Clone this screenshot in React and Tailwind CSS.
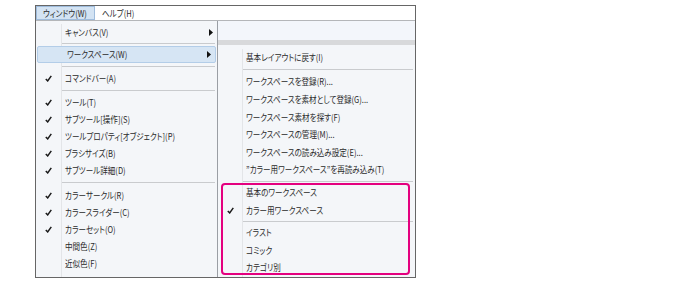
import React from "react";

const Check = () => (
  <svg width="7" height="7" viewBox="0 0 7 7" className="block">
    <path d="M0.8 3.9 L2.7 5.9 L6.3 0.9" fill="none" stroke="#1a1a1a" strokeWidth="1.5" />
  </svg>
);

const Arrow = () => (
  <svg width="4" height="7" viewBox="0 0 4 7" className="block">
    <polygon points="0,0 4,3.5 0,7" fill="#111" />
  </svg>
);

const T = ({ children }) => (
  <span className="inline-block whitespace-nowrap origin-left scale-x-[0.84]">{children}</span>
);

const Row = ({ label, checked, arrow, highlight, col = "w-[26px]", h = "h-[17px]" }) => (
  <div
    className={
      "flex items-center shrink-0 " + h + " " +
      (highlight ? "mx-[1px] bg-[#d6e5f4] border border-[#b3cde8] rounded-[2px]" : "")
    }
  >
    <div className={col + " h-full flex items-center justify-center shrink-0 " + (highlight ? "" : "border-r border-[#e3e5e8]")}>
      {checked ? <Check /> : null}
    </div>
    <div className="flex-1 pl-[3px] whitespace-nowrap overflow-visible">
      <T>{label}</T>
    </div>
    {arrow ? (
      <div className="pr-[4px]">
        <Arrow />
      </div>
    ) : null}
  </div>
);

const Sep = ({ h = "h-[7px]", col = "w-[26px]" }) => (
  <div className={"flex shrink-0 " + h}>
    <div className={col + " border-r border-[#e3e5e8] shrink-0"} />
    <div className="flex-1 flex items-center pr-[2px]">
      <div className="h-[1px] w-full bg-[#c9cbce]" />
    </div>
  </div>
);

export default function App() {
  const S = { col: "w-[25px]", h: "h-[17.6px]" };
  return (
    <div
      className="w-[691px] h-[284px] bg-white pt-[5px] pl-[35px] text-[9px] leading-none text-[#2a2a2a] [font-feature-settings:'palt']"
      style={{ fontFamily: '"Noto Sans CJK JP", "Noto Sans", sans-serif' }}
    >
      <div className="relative w-[381px] h-[273px] border border-[#666] flex flex-col overflow-hidden bg-white">
        {/* menu bar */}
        <div className="h-[14px] flex items-stretch shrink-0">
          <div className="w-[59px] bg-[#d3e3f3] border border-[#9fbcdc] flex items-center pl-[6px] whitespace-nowrap">
            <T>ウィンドウ(W)</T>
          </div>
          <div className="flex items-center pl-[7px] whitespace-nowrap">
            <T>ヘルプ(H)</T>
          </div>
        </div>
        {/* body */}
        <div className="flex flex-1 border-t border-[#b4b6b9]">
          {/* first menu */}
          <div className="w-[182px] shrink-0 bg-[#f4f6f9] border-r border-[#9a9ea4] pt-[2.5px] flex flex-col">
            <Row label="キャンバス(V)" arrow />
            <Sep h="h-[5px]" />
            <Row label="ワークスペース(W)" arrow highlight />
            <Sep />
            <Row label="コマンドバー(A)" checked />
            <Sep />
            <Row label="ツール(T)" checked />
            <Row label="サブツール[操作](S)" checked />
            <Row label="ツールプロパティ[オブジェクト](P)" checked />
            <Row label="ブラシサイズ(B)" checked />
            <Row label="サブツール詳細(D)" checked />
            <Sep h="h-[8px]" />
            <Row label="カラーサークル(R)" checked />
            <Row label="カラースライダー(C)" checked />
            <Row label="カラーセット(O)" checked />
            <Row label="中間色(Z)" />
            <Row label="近似色(F)" />
            <div className="flex flex-1">
              <div className="w-[26px] border-r border-[#e3e5e8]" />
            </div>
          </div>
          {/* right side */}
          <div className="flex-1 flex flex-col">
            <div className="h-[19px] bg-[#f3f6fb] shrink-0" />
            <div className="h-[5px] bg-[#d8d9db] shrink-0" />
            <div className="-ml-[1px] flex-1 bg-[#f4f6f9] border-l border-[#9a9ea4] pt-[4px] flex flex-col">
              <Row {...S} label="基本レイアウトに戻す(I)" />
              <Sep col="w-[25px]" h="h-[6.5px]" />
              <Row {...S} label="ワークスペースを登録(R)..." />
              <Row {...S} label="ワークスペースを素材として登録(G)..." />
              <Row {...S} label="ワークスペース素材を探す(F)" />
              <Row {...S} label="ワークスペースの管理(M)..." />
              <Row {...S} label="ワークスペースの読み込み設定(E)..." />
              <Row {...S} label="”カラー用ワークスペース”を再読み込み(T)" />
              <Sep col="w-[25px]" h="h-[5px]" />
              <Row {...S} label="基本のワークスペース" />
              <Row {...S} label="カラー用ワークスペース" checked />
              <Sep col="w-[25px]" h="h-[5px]" />
              <Row {...S} label="イラスト" />
              <Row {...S} label="コミック" />
              <Row {...S} label="カテゴリ別" />
              <div className="flex flex-1">
                <div className="w-[25px] border-r border-[#e3e5e8]" />
              </div>
            </div>
          </div>
        </div>
        {/* annotation highlight */}
        <div className="absolute left-[185px] top-[177px] w-[189px] h-[92px] border-2 border-[#e4007f] rounded-[4px] pointer-events-none" />
      </div>
    </div>
  );
}
